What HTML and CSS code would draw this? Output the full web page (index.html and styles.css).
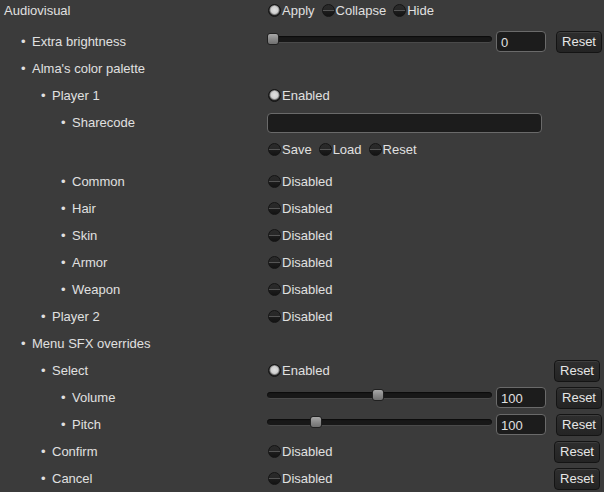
FILE: index.html
```html
<!DOCTYPE html>
<html>
<head>
<meta charset="utf-8">
<link rel="stylesheet" href="styles.css">
</head>
<body>
<div class="panel">
  <div class="row first">
    <div class="label l0">Audiovisual</div>
    <div class="ctl">
      <span class="opt"><span class="radio on"></span>Apply</span>
      <span class="opt"><span class="radio"></span>Collapse</span>
      <span class="opt"><span class="radio"></span>Hide</span>
    </div>
  </div>
  <div class="row">
    <div class="label l1"><span class="dot">•</span>Extra brightness</div>
    <div class="ctl">
      <div class="slider"><span class="knob" style="left:0%"></span></div>
      <div class="num">0</div>
      <button class="btn">Reset</button>
    </div>
  </div>
  <div class="row">
    <div class="label l1"><span class="dot">•</span>Alma's color palette</div>
    <div class="ctl"></div>
  </div>
  <div class="row">
    <div class="label l2"><span class="dot">•</span>Player 1</div>
    <div class="ctl"><span class="opt"><span class="radio on"></span>Enabled</span></div>
  </div>
  <div class="row">
    <div class="label l3"><span class="dot">•</span>Sharecode</div>
    <div class="ctl"><div class="text"></div></div>
  </div>
  <div class="row gapafter">
    <div class="label"></div>
    <div class="ctl">
      <span class="opt"><span class="radio"></span>Save</span>
      <span class="opt"><span class="radio"></span>Load</span>
      <span class="opt"><span class="radio"></span>Reset</span>
    </div>
  </div>
  <div class="row">
    <div class="label l3"><span class="dot">•</span>Common</div>
    <div class="ctl"><span class="opt"><span class="radio"></span>Disabled</span></div>
  </div>
  <div class="row">
    <div class="label l3"><span class="dot">•</span>Hair</div>
    <div class="ctl"><span class="opt"><span class="radio"></span>Disabled</span></div>
  </div>
  <div class="row">
    <div class="label l3"><span class="dot">•</span>Skin</div>
    <div class="ctl"><span class="opt"><span class="radio"></span>Disabled</span></div>
  </div>
  <div class="row">
    <div class="label l3"><span class="dot">•</span>Armor</div>
    <div class="ctl"><span class="opt"><span class="radio"></span>Disabled</span></div>
  </div>
  <div class="row">
    <div class="label l3"><span class="dot">•</span>Weapon</div>
    <div class="ctl"><span class="opt"><span class="radio"></span>Disabled</span></div>
  </div>
  <div class="row">
    <div class="label l2"><span class="dot">•</span>Player 2</div>
    <div class="ctl"><span class="opt"><span class="radio"></span>Disabled</span></div>
  </div>
  <div class="row">
    <div class="label l1"><span class="dot">•</span>Menu SFX overrides</div>
    <div class="ctl"></div>
  </div>
  <div class="row">
    <div class="label l2"><span class="dot">•</span>Select</div>
    <div class="ctl">
      <span class="opt"><span class="radio on"></span>Enabled</span>
      <button class="btn push">Reset</button>
    </div>
  </div>
  <div class="row">
    <div class="label l3"><span class="dot">•</span>Volume</div>
    <div class="ctl">
      <div class="slider"><span class="knob" style="left:46.7%"></span></div>
      <div class="num">100</div>
      <button class="btn">Reset</button>
    </div>
  </div>
  <div class="row">
    <div class="label l3"><span class="dot">•</span>Pitch</div>
    <div class="ctl">
      <div class="slider"><span class="knob" style="left:19.1%"></span></div>
      <div class="num">100</div>
      <button class="btn">Reset</button>
    </div>
  </div>
  <div class="row">
    <div class="label l2"><span class="dot">•</span>Confirm</div>
    <div class="ctl">
      <span class="opt"><span class="radio"></span>Disabled</span>
      <button class="btn push">Reset</button>
    </div>
  </div>
  <div class="row">
    <div class="label l2"><span class="dot">•</span>Cancel</div>
    <div class="ctl">
      <span class="opt"><span class="radio"></span>Disabled</span>
      <button class="btn push">Reset</button>
    </div>
  </div>
</div>
</body>
</html>
```
FILE: styles.css
```css
html, body {
  margin: 0;
  padding: 0;
  background: #3b3b3b;
}
body {
  width: 604px;
  height: 492px;
  overflow: hidden;
  font-family: "Liberation Sans", Arial, sans-serif;
  font-size: 13px;
  color: #e0e0e0;
}
.panel {
  display: flex;
  flex-direction: column;
  padding: 0 4px 0 0;
}
.row {
  display: grid;
  grid-template-columns: 267px 1fr;
  align-items: center;
  height: 27px;
}
.row.first {
  height: 21px;
  margin-bottom: 7px;
}
.row.gapafter {
  margin-bottom: 5px;
}
.label {
  padding-bottom: 1px;
  white-space: nowrap;
  line-height: 15px;
}
.l0 { padding-left: 4px; }
.l1 { padding-left: 21px; }
.l2 { padding-left: 41px; }
.l3 { padding-left: 61px; }
.dot {
  display: inline-block;
  width: 11px;
}
.ctl {
  display: flex;
  align-items: center;
  height: 100%;
  white-space: nowrap;
}
.opt {
  display: inline-flex;
  align-items: center;
  margin-right: 6px;
  line-height: 15px;
}
.radio {
  display: inline-block;
  box-sizing: border-box;
  width: 13px;
  height: 13px;
  margin-left: 1px;
  margin-right: 1px;
  border-radius: 50%;
  border: 1px solid #141414;
  background: linear-gradient(#2a2a2a 0%, #272727 44%, #555 50%, #1c1c1c 58%, #131313 100%);
}
.radio.on {
  background: radial-gradient(circle at 50% 45%, #e0e0e0 0, #cfcfcf 3.5px, #888 4.5px, #262626 5.5px, #1a1a1a 100%);
}
.slider {
  position: relative;
  box-sizing: border-box;
  width: 225px;
  height: 7px;
  margin-top: -4px;
  border-radius: 4px;
  background: #181818;
  border-bottom: 1px solid #4a4a4a;
  box-shadow: inset 0 1px 1px #0c0c0c;
}
.knob {
  position: absolute;
  top: -3px;
  box-sizing: border-box;
  width: 12px;
  height: 12px;
  border-radius: 3px;
  border: 1px solid #202020;
  background: linear-gradient(#a8a8a8, #8a8a8a 50%, #707070);
}
.num {
  box-sizing: border-box;
  width: 50px;
  height: 21px;
  margin-left: 4px;
  padding: 3px 0 0 4px;
  border: 1px solid #6a6a6a;
  border-radius: 4px;
  background: #1c1c1c;
  line-height: 15px;
}
.text {
  box-sizing: border-box;
  width: 275px;
  height: 20px;
  border: 1px solid #6a6a6a;
  border-radius: 4px;
  background: #1c1c1c;
}
.btn {
  box-sizing: border-box;
  width: 46px;
  height: 22px;
  margin-left: 10px;
  padding: 0;
  border: 1px solid #141414;
  border-radius: 4px;
  background: linear-gradient(#2e2e2e, #242424);
  box-shadow: inset 0 1px 0 #3e3e3e;
  color: #e6e6e6;
  font-family: "Liberation Sans", Arial, sans-serif;
  font-size: 13px;
  line-height: 15px;
}
.btn.push {
  margin-left: auto;
}
```
